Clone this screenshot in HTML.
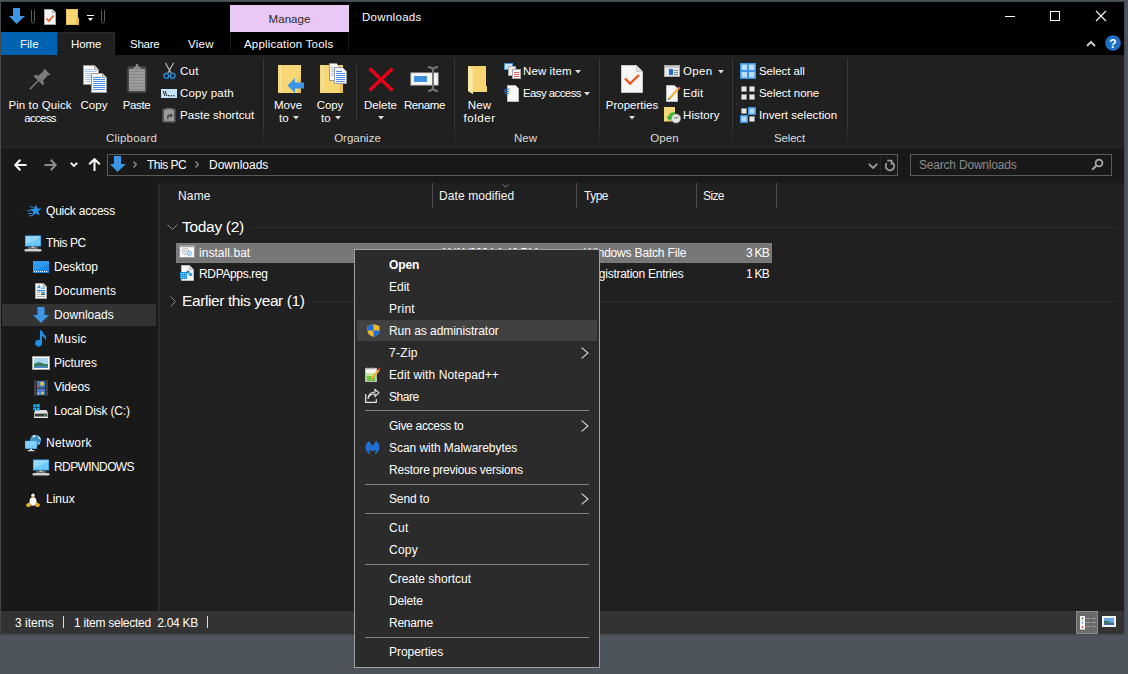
<!DOCTYPE html>
<html><head><meta charset="utf-8">
<style>
*{margin:0;padding:0;box-sizing:border-box}
html,body{width:1128px;height:674px;overflow:hidden;background:#4c535b;font-family:"Liberation Sans",sans-serif;font-size:12px;color:#fff}
.a{position:absolute}
.t{position:absolute;font-size:11.5px;line-height:15px;white-space:nowrap;color:#fff}
.c{text-align:center}
svg{position:absolute;overflow:visible}
</style></head><body>
<!-- window -->
<div class="a" style="left:0;top:1px;width:1125px;height:634px;background:#43484d"></div>
<div class="a" id="win" style="left:1px;top:2px;width:1123px;height:632px;background:#202020"></div>
<!-- title bar -->
<div class="a" style="left:1px;top:2px;width:1123px;height:53px;background:#000"></div>
<div class="a" style="left:230px;top:5px;width:119px;height:27px;background:#e9c8f5"></div>
<div class="t c" style="left:230px;top:12px;width:119px;color:#2a2a2a;letter-spacing:0.05px">Manage</div>
<div class="t" style="left:362px;top:10px;letter-spacing:0.3px">Downloads</div>

<!-- QAT icons -->
<svg style="left:9px;top:8px" width="16" height="16" viewBox="0 0 16 16"><path d="M4 0H11V8H16L7.5 16L0 8H4Z" fill="#3d95e6"/></svg>
<svg style="left:31px;top:10px" width="4" height="13" viewBox="0 0 4 13"><path d="M0.5 0V11.5A1.5 1.5 0 0 0 3.5 11.5V0" fill="none" stroke="#5a5a5a" stroke-width="1"/></svg>
<svg style="left:44px;top:9px" width="12" height="16" viewBox="0 0 12 16"><path d="M0.5 0.5H8.5L11.5 3.5V15.5H0.5Z" fill="#f4f4f4" stroke="#aaa" stroke-width="1"/><path d="M8.5 0.5V3.5H11.5" fill="#ddd" stroke="#aaa"/><path d="M2.5 9.5L5 12L9.5 6.5" fill="none" stroke="#e8561a" stroke-width="1.6"/></svg>
<svg style="left:66px;top:9px" width="13" height="16" viewBox="0 0 13 16"><rect x="0" y="0" width="12" height="16" fill="#f8d775"/><rect x="0.5" y="0.5" width="11" height="15" fill="none" stroke="#e9bd4c"/><rect x="10" y="9" width="3" height="7" fill="#e8c04e"/></svg>
<svg style="left:87px;top:15px" width="8" height="7" viewBox="0 0 8 7"><rect x="0" y="0" width="7" height="1" fill="#fff"/><path d="M1 3H6L3.5 6Z" fill="#fff"/></svg>
<svg style="left:101px;top:10px" width="4" height="13" viewBox="0 0 4 13"><path d="M0.5 0V11.5A1.5 1.5 0 0 0 3.5 11.5V0" fill="none" stroke="#5a5a5a" stroke-width="1"/></svg>
<!-- window controls -->
<div class="a" style="left:1005px;top:16px;width:10px;height:1px;background:#fff"></div>
<div class="a" style="left:1050px;top:11px;width:10px;height:10px;border:1px solid #fff"></div>
<svg style="left:1096px;top:11px" width="10" height="10" viewBox="0 0 10 10"><path d="M0 0L10 10M10 0L0 10" stroke="#fff" stroke-width="1.1"/></svg>
<svg style="left:1086px;top:40px" width="10" height="7" viewBox="0 0 10 7"><path d="M1 6L5 2L9 6" fill="none" stroke="#c8c8c8" stroke-width="2"/></svg>
<svg style="left:1105px;top:35px" width="16" height="16" viewBox="0 0 16 16"><circle cx="8" cy="8" r="7.8" fill="#1f6fc5"/><text x="8" y="12.5" text-anchor="middle" font-family="Liberation Sans" font-weight="bold" font-size="12" fill="#fff">?</text></svg>
<!-- tabs -->
<div class="a" style="left:1px;top:32px;width:56px;height:23px;background:#0063b1"></div>
<div class="a" style="left:57px;top:32px;width:58px;height:23px;background:#202020;border:1px solid #2b2b2b;border-bottom:none"></div>
<div class="t" style="left:20px;top:37px">File</div>
<div class="t" style="left:71px;top:37px;letter-spacing:-0.1px">Home</div>
<div class="t" style="left:130px;top:37px;letter-spacing:-0.25px">Share</div>
<div class="t" style="left:188px;top:37px;letter-spacing:0.3px">View</div>
<div class="a" style="left:230px;top:32px;width:1px;height:18px;background:#1c1c1c"></div>
<div class="a" style="left:348px;top:32px;width:1px;height:18px;background:#1c1c1c"></div>
<div class="t" style="left:244px;top:37px;letter-spacing:0.2px">Application Tools</div>
<!-- ribbon -->
<div class="a" style="left:1px;top:55px;width:1123px;height:92px;background:#202020"></div>
<div class="a" style="left:263px;top:58px;width:1px;height:72px;background:#3a3a3a"></div><div class="a" style="left:263px;top:130px;width:1px;height:13px;background:#2a2a2a"></div>
<div class="a" style="left:454px;top:58px;width:1px;height:72px;background:#3a3a3a"></div><div class="a" style="left:454px;top:130px;width:1px;height:13px;background:#2a2a2a"></div>
<div class="a" style="left:599px;top:58px;width:1px;height:72px;background:#3a3a3a"></div><div class="a" style="left:599px;top:130px;width:1px;height:13px;background:#2a2a2a"></div>
<div class="a" style="left:732px;top:58px;width:1px;height:72px;background:#3a3a3a"></div><div class="a" style="left:732px;top:130px;width:1px;height:13px;background:#2a2a2a"></div>
<div class="a" style="left:847px;top:58px;width:1px;height:72px;background:#3a3a3a"></div><div class="a" style="left:847px;top:130px;width:1px;height:13px;background:#2a2a2a"></div>
<div class="a" style="left:356px;top:65px;width:1px;height:55px;background:#3a3a3a"></div>

<!-- ribbon icons: clipboard -->
<svg style="left:30px;top:69px" width="20" height="20" viewBox="0 0 20 20"><g transform="translate(16,4) rotate(45)"><path d="M-4.5 -2H4.5L3 1L3.5 7.5L6.5 9V11H-6.5V9L-3.5 7.5L-3 1Z" fill="#7a7a7a"/><rect x="-0.8" y="11" width="1.6" height="12" fill="#7a7a7a"/></g></svg>
<svg style="left:83px;top:65px" width="24" height="28" viewBox="0 0 24 28"><path d="M0.5 0.5H11.5L15.5 4.5V19.5H0.5Z" fill="#fbfbfb" stroke="#9a9a9a"/><path d="M11.5 0.5V4.5H15.5" fill="#e0e0e0" stroke="#9a9a9a"/><g fill="#a9c8f0"><rect x="2" y="4" width="8" height="1"/><rect x="2" y="6" width="12" height="1"/><rect x="2" y="8" width="6" height="1"/><rect x="2" y="10" width="6" height="1"/><rect x="2" y="12" width="6" height="1"/><rect x="2" y="14" width="6" height="1"/><rect x="2" y="16" width="6" height="1"/></g>
<path d="M8.5 8.5H19.5L23.5 12.5V27.5H8.5Z" fill="#fbfbfb" stroke="#9a9a9a"/><path d="M19.5 8.5V12.5H23.5" fill="#e0e0e0" stroke="#9a9a9a"/><g fill="#4a90e2"><rect x="10" y="12" width="8" height="1"/><rect x="10" y="14" width="12" height="1"/><rect x="10" y="16" width="12" height="1"/><rect x="10" y="18" width="12" height="1"/><rect x="10" y="20" width="12" height="1"/><rect x="10" y="22" width="12" height="1"/><rect x="10" y="24" width="12" height="1"/></g></svg>
<svg style="left:127px;top:64px" width="20" height="29" viewBox="0 0 20 29"><rect x="0.5" y="2.5" width="19" height="26" rx="2" fill="#4a4a4a" stroke="#3c3c3c"/><rect x="2" y="5" width="16" height="22" fill="#9b9b9b"/><g fill="#8a8a8a"><rect x="2" y="7" width="16" height="1"/><rect x="2" y="10" width="16" height="1"/><rect x="2" y="13" width="16" height="1"/><rect x="2" y="16" width="16" height="1"/><rect x="2" y="19" width="16" height="1"/><rect x="2" y="22" width="16" height="1"/><rect x="2" y="25" width="16" height="1"/></g><path d="M5 6L7 3H8.5V1.5A1.5 1.5 0 0 1 11.5 1.5V3H13L15 6Z" fill="#8c8c8c"/></svg>
<svg style="left:163px;top:63px" width="13" height="17" viewBox="0 0 13 17"><path d="M2.5 0L8 10M10.5 0L5 10" stroke="#c4c4c4" stroke-width="1.1"/><ellipse cx="3.3" cy="12.8" rx="2.3" ry="2.6" fill="none" stroke="#1e8fe0" stroke-width="1.4" transform="rotate(-20 3.3 12.8)"/><ellipse cx="9.7" cy="12.8" rx="2.3" ry="2.6" fill="none" stroke="#1e8fe0" stroke-width="1.4" transform="rotate(20 9.7 12.8)"/></svg>
<svg style="left:161px;top:89px" width="16" height="9" viewBox="0 0 16 9"><rect x="0" y="0" width="16" height="9" fill="#c4e4fb"/><path d="M2 2L4 7M4 2L6 7" stroke="#222" stroke-width="1"/><rect x="7" y="6" width="1.3" height="1.3" fill="#222"/><rect x="9.5" y="6" width="1.3" height="1.3" fill="#222"/><rect x="12" y="6" width="1.3" height="1.3" fill="#222"/></svg>
<svg style="left:162px;top:107px" width="14" height="16" viewBox="0 0 14 16"><rect x="0.5" y="1.5" width="13" height="14" rx="1.5" fill="#555" stroke="#444"/><rect x="2" y="3" width="10" height="11" fill="#9a9a9a"/><path d="M4 1.5H10V3.5H4Z" fill="#8a8a8a"/><path d="M5 12V9.5A2 2 0 0 1 7 7.5H8.5V6L11 8.5L8.5 11V9.5H7.5A1 1 0 0 0 6.5 10.5V12Z" fill="#4a4a4a"/></svg>
<!-- organize -->
<svg style="left:278px;top:65px" width="27" height="29" viewBox="0 0 27 29"><rect x="0" y="0" width="23" height="28" fill="#f7d774"/><rect x="2" y="1" width="1" height="26" fill="#fbe7a4"/><rect x="20" y="14" width="3" height="14" fill="#e9c255"/><path d="M17 13L9.5 20.5L17 28V23.5H26V17.5H17Z" fill="#3d95e6"/></svg>
<svg style="left:320px;top:63px" width="27" height="31" viewBox="0 0 27 31"><rect x="0" y="2" width="23" height="28" fill="#f7d774"/><rect x="2" y="3" width="1" height="26" fill="#fbe7a4"/><rect x="20" y="16" width="3" height="14" fill="#e9c255"/><path d="M9.5 0.5H16.5L19.5 3.5V17.5H9.5Z" fill="#fbfbfb" stroke="#9a9a9a"/><g fill="#a9c8f0"><rect x="11" y="4" width="4" height="1"/><rect x="11" y="6" width="7" height="1"/><rect x="11" y="8" width="3" height="1"/><rect x="11" y="10" width="3" height="1"/><rect x="11" y="12" width="3" height="1"/></g><path d="M14.5 4.5H22.5L26.5 8.5V20.5H14.5Z" fill="#fbfbfb" stroke="#9a9a9a"/><g fill="#4a90e2"><rect x="16" y="8" width="6" height="1"/><rect x="16" y="10" width="9" height="1"/><rect x="16" y="12" width="9" height="1"/><rect x="16" y="14" width="9" height="1"/><rect x="16" y="16" width="9" height="1"/><rect x="16" y="18" width="9" height="1"/></g></svg>
<svg style="left:368px;top:67px" width="26" height="25" viewBox="0 0 26 25"><path d="M1.5 1.5L24.5 23.5M24.5 1.5L1.5 23.5" stroke="#e8001a" stroke-width="3.4"/></svg>
<svg style="left:410px;top:66px" width="30" height="26" viewBox="0 0 30 26"><rect x="1" y="7" width="27" height="12" fill="#f7f7f7" stroke="#cfcfcf" stroke-width="1"/><rect x="4" y="10" width="13" height="6" fill="#3d8fe0"/><path d="M18 1Q21 1 23 3Q25 1 28 1M23 3V23M18 25Q21 25 23 23Q25 25 28 25" fill="none" stroke="#777" stroke-width="2"/></svg>
<!-- dropdown triangles -->
<svg style="left:293px;top:116px" width="6" height="4" viewBox="0 0 6 4"><path d="M0 0H6L3 3.5Z" fill="#ddd"/></svg>
<svg style="left:335px;top:116px" width="6" height="4" viewBox="0 0 6 4"><path d="M0 0H6L3 3.5Z" fill="#ddd"/></svg>
<svg style="left:378px;top:116px" width="6" height="4" viewBox="0 0 6 4"><path d="M0 0H6L3 3.5Z" fill="#ddd"/></svg>
<svg style="left:629px;top:116px" width="6" height="4" viewBox="0 0 6 4"><path d="M0 0H6L3 3.5Z" fill="#ddd"/></svg>
<svg style="left:575px;top:70px" width="6" height="4" viewBox="0 0 6 4"><path d="M0 0H6L3 3.5Z" fill="#ddd"/></svg>
<svg style="left:584px;top:92px" width="6" height="4" viewBox="0 0 6 4"><path d="M0 0H6L3 3.5Z" fill="#ddd"/></svg>
<svg style="left:718px;top:70px" width="6" height="4" viewBox="0 0 6 4"><path d="M0 0H6L3 3.5Z" fill="#ddd"/></svg>
<!-- new -->
<svg style="left:468px;top:66px" width="20" height="28" viewBox="0 0 20 28"><path d="M0 0H18V20H19V26H5V28L0 25Z" fill="#f4cf6a"/><path d="M0 0L5 3V28L0 25Z" fill="#fbe6a2"/><path d="M5 3H18V26H5Z" fill="#f6d572"/></svg>
<svg style="left:504px;top:63px" width="17" height="16" viewBox="0 0 17 16"><rect x="0.5" y="0.5" width="8" height="6" fill="#cde6fb" stroke="#4a90e2"/><rect x="4.5" y="3.5" width="7" height="9" fill="#eee" stroke="#aaa"/><rect x="8.5" y="6.5" width="8" height="9" fill="#f8f8f8" stroke="#aaa"/><g fill="#e06060"><rect x="10" y="9" width="5" height="1"/><rect x="10" y="11" width="5" height="1"/><rect x="10" y="13" width="5" height="1"/></g></svg>
<svg style="left:504px;top:85px" width="16" height="17" viewBox="0 0 16 17"><path d="M3.5 0.5H11.5L14.5 3.5V16.5H3.5Z" fill="#f8f8f8" stroke="#bbb"/><path d="M0 5L6 4M0 7L5 6.5M1 9L5 8.5" stroke="#2b7fd0" stroke-width="1"/></svg>
<!-- open group -->
<svg style="left:621px;top:65px" width="22" height="28" viewBox="0 0 22 28"><path d="M0.5 0.5H15.5L21.5 6.5V27.5H0.5Z" fill="#f6f6f6" stroke="#c8c8c8"/><path d="M15.5 0.5V6.5H21.5" fill="#dedede" stroke="#c8c8c8"/><path d="M4 13.5L9 18.5L18 10" fill="none" stroke="#ea5a1c" stroke-width="2.4"/></svg>
<svg style="left:664px;top:65px" width="16" height="12" viewBox="0 0 16 12"><rect x="0.5" y="0.5" width="15" height="11" fill="#e8e8e8" stroke="#aaa"/><rect x="1" y="1" width="14" height="2" fill="#c8c8c8"/><rect x="5" y="4" width="4" height="6" fill="#1a6fd0"/><g fill="#888"><rect x="10" y="5" width="4" height="1"/><rect x="10" y="7" width="4" height="1"/><rect x="10" y="9" width="4" height="1"/></g></svg>
<svg style="left:666px;top:85px" width="15" height="17" viewBox="0 0 15 17"><path d="M0.5 0.5H8.5L11.5 3.5V16.5H0.5Z" fill="#f8f8f8" stroke="#bbb"/><path d="M3 14L13 3" stroke="#f2b233" stroke-width="2.2"/><path d="M12 2L14 4" stroke="#e05555" stroke-width="2"/><path d="M2 15L3.5 13" stroke="#444" stroke-width="1"/></svg>
<svg style="left:664px;top:107px" width="17" height="17" viewBox="0 0 17 17"><rect x="0" y="0" width="11" height="14.5" fill="#f5d678"/><circle cx="12" cy="11.5" r="4.6" fill="#e6e6e6" stroke="#8a8a8a" stroke-width="0.8"/><path d="M10 12L11.5 10L12.5 11.5L14 9.5" stroke="#555" stroke-width="0.8" fill="none"/><path d="M11 6.5Q6 6 5.5 11" fill="none" stroke="#2bb33a" stroke-width="2.2"/><path d="M2.5 9.5H8.5L5.5 14Z" fill="#2bb33a"/></svg>
<!-- select group -->
<svg style="left:740px;top:63px" width="16" height="16" viewBox="0 0 16 16"><rect x="0" y="0" width="16" height="16" fill="#3d95e6"/><g fill="#b9dcfa"><rect x="1.5" y="1.5" width="5.5" height="5.5"/><rect x="9" y="1.5" width="5.5" height="5.5"/><rect x="1.5" y="9" width="5.5" height="5.5"/><rect x="9" y="9" width="5.5" height="5.5"/></g></svg>
<svg style="left:741px;top:86px" width="14" height="14" viewBox="0 0 14 14"><g fill="#e8e8e8" stroke="#777" stroke-width="0.6"><rect x="0.3" y="0.3" width="5.4" height="5.4"/><rect x="8.3" y="0.3" width="5.4" height="5.4"/><rect x="0.3" y="8.3" width="5.4" height="5.4"/><rect x="8.3" y="8.3" width="5.4" height="5.4"/></g></svg>
<svg style="left:740px;top:107px" width="16" height="16" viewBox="0 0 16 16"><rect x="8" y="0" width="8" height="8" fill="#3d95e6"/><rect x="0" y="8" width="8" height="8" fill="#3d95e6"/><g fill="#b9dcfa"><rect x="9.5" y="1.5" width="5" height="5"/><rect x="1.5" y="9.5" width="5" height="5"/></g><g fill="#e8e8e8" stroke="#777" stroke-width="0.6"><rect x="1.3" y="1.3" width="5.4" height="5.4"/><rect x="9.3" y="9.3" width="5.4" height="5.4"/></g></svg>
<!-- large labels -->
<div class="t c" style="left:0px;top:98px;width:80px;letter-spacing:0.1px">Pin to Quick</div>
<div class="t c" style="left:0px;top:111px;width:80px;letter-spacing:-0.7px">access</div>
<div class="t c" style="left:74px;top:98px;width:40px">Copy</div>
<div class="t c" style="left:116px;top:98px;width:41px;letter-spacing:-0.4px">Paste</div>
<div class="t" style="left:180px;top:64px;letter-spacing:0.25px">Cut</div>
<div class="t" style="left:180px;top:86px;letter-spacing:0.15px">Copy path</div>
<div class="t" style="left:180px;top:108px;letter-spacing:0.05px">Paste shortcut</div>
<div class="t c" style="left:268px;top:98px;width:40px">Move</div>
<div class="t" style="left:279px;top:111px">to</div>
<div class="t c" style="left:310px;top:98px;width:40px;letter-spacing:-0.05px">Copy</div>
<div class="t" style="left:321px;top:111px">to</div>
<div class="t c" style="left:360px;top:98px;width:41px;letter-spacing:-0.05px">Delete</div>
<div class="t c" style="left:402px;top:98px;width:45px;letter-spacing:-0.4px">Rename</div>
<div class="t c" style="left:460px;top:98px;width:39px;letter-spacing:0.15px">New</div>
<div class="t c" style="left:460px;top:111px;width:39px;letter-spacing:0.55px">folder</div>
<div class="t" style="left:523px;top:64px;letter-spacing:0.1px">New item</div>
<div class="t" style="left:523px;top:86px;letter-spacing:-0.6px">Easy access</div>
<div class="t c" style="left:602px;top:98px;width:60px">Properties</div>
<div class="t" style="left:683px;top:64px;letter-spacing:0.3px">Open</div>
<div class="t" style="left:683px;top:86px;letter-spacing:0.15px">Edit</div>
<div class="t" style="left:683px;top:108px;letter-spacing:0.1px">History</div>
<div class="t" style="left:759px;top:64px;letter-spacing:-0.1px">Select all</div>
<div class="t" style="left:759px;top:86px;letter-spacing:-0.05px">Select none</div>
<div class="t" style="left:759px;top:108px;letter-spacing:0.05px">Invert selection</div>
<!-- group labels -->
<div class="t c" style="left:101px;top:131px;width:61px;color:#dcdcdc;letter-spacing:0.2px">Clipboard</div>
<div class="t c" style="left:327px;top:131px;width:61px;color:#dcdcdc">Organize</div>
<div class="t c" style="left:495px;top:131px;width:61px;color:#dcdcdc">New</div>
<div class="t c" style="left:634px;top:131px;width:61px;color:#dcdcdc;letter-spacing:0.1px">Open</div>
<div class="t c" style="left:759px;top:131px;width:61px;color:#dcdcdc;letter-spacing:-0.2px">Select</div>
<!-- address row -->
<div class="a" style="left:1px;top:147px;width:1123px;height:36px;background:#191919"></div>
<div class="a" style="left:1px;top:147px;width:1123px;height:1px;background:#2a2a2a"></div>
<div class="a" style="left:107px;top:154px;width:791px;height:22px;border:1px solid #5a5a5a"></div>
<div class="t" style="left:147px;top:158px;font-size:12px;letter-spacing:-0.5px">This PC</div>
<div class="t" style="left:209px;top:158px;font-size:12px">Downloads</div>
<div class="a" style="left:910px;top:154px;width:202px;height:22px;border:1px solid #5a5a5a"></div>
<div class="t" style="left:919px;top:158px;color:#8a8a8a;font-size:12px;letter-spacing:-0.2px">Search Downloads</div>
<!-- nav pane -->
<div class="a" style="left:1px;top:183px;width:157px;height:428px;background:#191919"></div>
<div class="a" style="left:158px;top:183px;width:2px;height:428px;background:#2a2a2a"></div>
<div class="a" style="left:2px;top:304px;width:154px;height:22px;background:#333"></div>
<div class="t" style="left:46px;top:204px;font-size:12px;letter-spacing:-0.2px">Quick access</div>
<div class="t" style="left:46px;top:236px;font-size:12px;letter-spacing:-0.4px">This PC</div>
<div class="t" style="left:54px;top:260px;font-size:12px">Desktop</div>
<div class="t" style="left:54px;top:284px;font-size:12px;letter-spacing:0.15px">Documents</div>
<div class="t" style="left:54px;top:308px;font-size:12px;letter-spacing:0.05px">Downloads</div>
<div class="t" style="left:54px;top:332px;font-size:12px;letter-spacing:0.25px">Music</div>
<div class="t" style="left:54px;top:356px;font-size:12px;letter-spacing:-0.05px">Pictures</div>
<div class="t" style="left:54px;top:380px;font-size:12px;letter-spacing:-0.1px">Videos</div>
<div class="t" style="left:54px;top:404px;font-size:12px;letter-spacing:-0.2px">Local Disk (C:)</div>
<div class="t" style="left:46px;top:436px;font-size:12px;letter-spacing:0.25px">Network</div>
<div class="t" style="left:54px;top:460px;font-size:12px;letter-spacing:-0.6px">RDPWINDOWS</div>
<div class="t" style="left:46px;top:492px;font-size:12px">Linux</div>
<!-- file list -->
<div class="t" style="left:178px;top:189px;color:#f4f4f4;font-size:12px;letter-spacing:0.15px">Name</div>
<div class="t" style="left:439px;top:189px;color:#f4f4f4;font-size:12px;letter-spacing:0.1px">Date modified</div>
<div class="t" style="left:584px;top:189px;color:#f4f4f4;font-size:12px;letter-spacing:-0.5px">Type</div>
<div class="t" style="left:703px;top:189px;color:#f4f4f4;font-size:12px;letter-spacing:-0.6px">Size</div>
<div class="a" style="left:432px;top:183px;width:1px;height:25px;background:#4e4e4e"></div>
<div class="a" style="left:576px;top:183px;width:1px;height:25px;background:#4e4e4e"></div>
<div class="a" style="left:696px;top:183px;width:1px;height:25px;background:#4e4e4e"></div>
<div class="a" style="left:776px;top:183px;width:1px;height:25px;background:#4e4e4e"></div>
<div class="t" style="left:182px;top:218px;font-size:15.5px;line-height:18px;letter-spacing:-0.3px">Today (2)</div>
<div class="a" style="left:251px;top:227px;width:866px;height:1px;background:#2e2e2e"></div>
<div class="a" style="left:176px;top:243px;width:596px;height:20px;background:#777;border:1px solid #7e7e7e"></div>

<svg style="left:179px;top:245px" width="16" height="13" viewBox="0 0 16 13"><rect x="0.5" y="0.5" width="15" height="12" fill="#fafafa" stroke="#9a9a9a"/><rect x="1" y="1" width="14" height="1.2" fill="#a8a8a8"/><circle cx="6.5" cy="6.3" r="3.1" fill="none" stroke="#777" stroke-width="0.9" stroke-dasharray="1.2 0.7"/><circle cx="6.5" cy="6.3" r="1.3" fill="none" stroke="#999" stroke-width="0.6"/><circle cx="10.5" cy="8.6" r="2.2" fill="#a8d6f8" stroke="#6ab4ec" stroke-width="0.7"/><path d="M9.5 7.6L11.5 9.6M11.5 7.6L9.5 9.6" stroke="#fff" stroke-width="0.6"/></svg>
<svg style="left:180px;top:265px" width="14" height="16" viewBox="0 0 14 16"><path d="M1.5 0.5H9.5L13.5 4.5V15.5H1.5Z" fill="#f8f8f8" stroke="#bbb"/><path d="M9.5 0.5V4.5H13.5" fill="#ddd" stroke="#bbb"/><rect x="0" y="7" width="7" height="7" fill="#1a8ae0"/><g fill="#9fd4fb"><rect x="1" y="8" width="1.2" height="1.2"/><rect x="3" y="8" width="1.2" height="1.2"/><rect x="5" y="8" width="1.2" height="1.2"/><rect x="1" y="10" width="1.2" height="1.2"/><rect x="3" y="10" width="1.2" height="1.2"/><rect x="5" y="10" width="1.2" height="1.2"/><rect x="1" y="12" width="1.2" height="1.2"/><rect x="3" y="12" width="1.2" height="1.2"/><rect x="5" y="12" width="1.2" height="1.2"/></g><path d="M8 5L10 7L8 9L6 7Z" fill="#1a8ae0"/><path d="M10.5 7.5L12.5 9.5L10.5 11.5L8.5 9.5Z" fill="#1a8ae0"/></svg>
<div class="t" style="left:199px;top:246px;font-size:12px;letter-spacing:0.05px">install.bat</div>
<div class="t" style="left:441px;top:246px;font-size:12px;letter-spacing:-0.55px">11/11/2024 1:46 PM</div>
<div class="t" style="left:584px;top:246px;font-size:12px;letter-spacing:-0.18px">Windows Batch File</div>
<div class="t" style="left:738px;top:246px;width:31px;text-align:right;letter-spacing:-0.75px;font-size:12px">3 KB</div>
<div class="t" style="left:199px;top:267px;font-size:12px;letter-spacing:-0.35px">RDPApps.reg</div>
<div class="t" style="left:584px;top:267px;font-size:12px;letter-spacing:-0.26px">Registration Entries</div>
<div class="t" style="left:738px;top:267px;width:31px;text-align:right;letter-spacing:-0.75px;font-size:12px">1 KB</div>
<div class="t" style="left:182px;top:292px;font-size:15.5px;line-height:18px;letter-spacing:-0.4px">Earlier this year (1)</div>
<div class="a" style="left:312px;top:301px;width:805px;height:1px;background:#2e2e2e"></div>

<!-- address row icons -->
<svg style="left:14px;top:159px" width="13" height="12" viewBox="0 0 13 12"><path d="M6.3 0.7L1.3 6L6.3 11.3M1.5 6H12.5" fill="none" stroke="#fff" stroke-width="2"/></svg>
<svg style="left:44px;top:159px" width="13" height="12" viewBox="0 0 13 12"><path d="M6.7 0.7L11.7 6L6.7 11.3M11.5 6H0.5" fill="none" stroke="#8a8a8a" stroke-width="2"/></svg>
<svg style="left:70px;top:162px" width="8" height="5" viewBox="0 0 8 5"><path d="M0.8 0.8L4 4L7.2 0.8" fill="none" stroke="#fff" stroke-width="1.8"/></svg>
<svg style="left:88px;top:158px" width="13" height="13" viewBox="0 0 13 13"><path d="M1.2 6.3L6.5 1.2L11.8 6.3M6.5 1.5V13" fill="none" stroke="#fff" stroke-width="2"/></svg>
<svg style="left:110px;top:156px" width="16" height="16" viewBox="0 0 16 16"><path d="M4 0H11V8H16L7.5 16L0 8H4Z" fill="#3d95e6"/></svg>
<svg style="left:133px;top:161px" width="4" height="7" viewBox="0 0 4 7"><path d="M0.5 0.5L3.3 3.5L0.5 6.5" fill="none" stroke="#8a8a8a" stroke-width="1.4"/></svg>
<svg style="left:195px;top:161px" width="4" height="7" viewBox="0 0 4 7"><path d="M0.5 0.5L3.3 3.5L0.5 6.5" fill="none" stroke="#8a8a8a" stroke-width="1.4"/></svg>
<div class="a" style="left:880px;top:155px;width:1px;height:20px;background:#262626"></div>
<svg style="left:868px;top:163px" width="10" height="6" viewBox="0 0 10 6"><path d="M0.8 0.8L5 5L9.2 0.8" fill="none" stroke="#9a9a9a" stroke-width="1.8"/></svg>
<svg style="left:884px;top:159px" width="12" height="12" viewBox="0 0 12 12"><path d="M7.5 3A4.3 4.3 0 1 1 2.7 4.2" fill="none" stroke="#9a9a9a" stroke-width="1.8"/><path d="M3.2 1.6H7.6V6" fill="none" stroke="#9a9a9a" stroke-width="1.7"/></svg>
<svg style="left:1091px;top:158px" width="13" height="13" viewBox="0 0 13 13"><circle cx="8" cy="5" r="3.4" fill="none" stroke="#a8a8a8" stroke-width="1.8"/><path d="M5.6 7.4L1.2 11.8" stroke="#a8a8a8" stroke-width="2"/></svg>
<!-- nav icons -->
<svg style="left:26px;top:204px" width="16" height="14" viewBox="0 0 16 14"><path d="M10 0.5L11.3 4.6L15.5 4.4L12.2 7.3L13.6 11.6L9.8 9.2L6.3 12.3L7.2 7.8L3.8 5.2L8 4.8Z" fill="#2a93e6"/><path d="M3.5 2.5L8 3.5M1 6.5L5 7.2M2 9.5L6.5 9.5M3 12L6.5 11.5" stroke="#2a93e6" stroke-width="0.9"/></svg>
<svg style="left:24px;top:235px" width="18" height="17" viewBox="0 0 18 17"><rect x="1" y="0.5" width="16" height="11" fill="#3ea6ee"/><rect x="1.8" y="1.3" width="14.4" height="9.4" fill="#6ec8fb"/><path d="M1.8 1.3H16.2V3L1.8 9Z" fill="#92d8ff"/><rect x="7.5" y="11.5" width="3" height="1.5" fill="#c8c8c8"/><rect x="4" y="12.5" width="10" height="1" fill="#bbb"/><rect x="0.5" y="14" width="17" height="2.5" rx="1.2" fill="#d0d0d0"/></svg>
<svg style="left:33px;top:261px" width="16" height="12" viewBox="0 0 16 12"><rect x="0" y="0" width="16" height="12" fill="#1a8ae6"/><path d="M0 0H16V3L0 10Z" fill="#3ea3f2" opacity="0.7"/><path d="M1 10.5H15" stroke="#fff" stroke-width="1" stroke-dasharray="1 1"/></svg>
<svg style="left:35px;top:283px" width="12" height="16" viewBox="0 0 12 16"><path d="M0.5 0.5H8.5L11.5 3.5V15.5H0.5Z" fill="#fafafa" stroke="#a8a8a8"/><path d="M8.5 0.5V3.5H11.5" fill="#ddd" stroke="#a8a8a8"/><path d="M2 5.5L4.3 2.2L5 5.5M2.7 4.5H4.8" fill="none" stroke="#2a8ae0" stroke-width="0.9"/><rect x="6" y="4.6" width="4" height="1" fill="#2a8ae0"/><rect x="2" y="7" width="8" height="1.2" fill="#1a7fe0"/><rect x="2" y="9" width="3" height="0.9" fill="#aaa"/><rect x="2" y="11" width="3" height="0.9" fill="#aaa"/><rect x="6" y="9" width="4" height="1" fill="#4a8ae8"/><rect x="6" y="10.5" width="4" height="1.5" fill="#2d5a3a"/><rect x="2" y="13" width="8" height="0.9" fill="#aaa"/></svg>
<svg style="left:33px;top:307px" width="16" height="16" viewBox="0 0 16 16"><path d="M4.5 0H11.5V8H16L8 16L0 8H4.5Z" fill="#3d95e6"/></svg>
<svg style="left:35px;top:330px" width="12" height="17" viewBox="0 0 12 17"><path d="M5 0.5H7V13A3.5 3.5 0 1 1 5 10Z" fill="#1e90e8"/><path d="M7 0.5Q8 4 10.5 6Q12 8 10 11Q11 8 7 6" fill="#1e90e8"/></svg>
<svg style="left:32px;top:356px" width="18" height="14" viewBox="0 0 18 14"><rect x="0.5" y="0.5" width="17" height="13" fill="#fafafa" stroke="#aaa"/><rect x="2" y="2" width="14" height="10" fill="#a8d8f0"/><path d="M2 8Q6 5 10 7T16 8V12H2Z" fill="#3b7a5a"/><path d="M2 10H16V12H2Z" fill="#4a88c0"/></svg>
<svg style="left:34px;top:380px" width="14" height="16" viewBox="0 0 14 16"><rect x="0" y="0" width="14" height="16" fill="#2a2a2a"/><g fill="#555"><rect x="0.5" y="0.5" width="1.5" height="15"/><rect x="12" y="0.5" width="1.5" height="15"/></g><g fill="#222"><rect x="0.8" y="2" width="0.9" height="1"/><rect x="0.8" y="5" width="0.9" height="1"/><rect x="0.8" y="8" width="0.9" height="1"/><rect x="0.8" y="11" width="0.9" height="1"/><rect x="0.8" y="14" width="0.9" height="1"/><rect x="12.3" y="2" width="0.9" height="1"/><rect x="12.3" y="5" width="0.9" height="1"/><rect x="12.3" y="8" width="0.9" height="1"/><rect x="12.3" y="11" width="0.9" height="1"/><rect x="12.3" y="14" width="0.9" height="1"/></g><rect x="3" y="1" width="8" height="6.5" fill="#3d7fd8"/><rect x="3" y="8.5" width="8" height="6.5" fill="#3d7fd8"/><circle cx="8" cy="3.8" r="2" fill="#e8c030"/><rect x="3" y="5.5" width="3" height="2" fill="#d04040"/><circle cx="8.5" cy="13" r="1.6" fill="#e8c030"/><rect x="3" y="12.5" width="2.5" height="2" fill="#9ad"/><circle cx="7.5" cy="9.8" r="1.1" fill="#c04090"/></svg>
<svg style="left:33px;top:404px" width="16" height="15" viewBox="0 0 16 15"><path d="M2.5 6H13.5L15 9H1Z" fill="#dedede"/><rect x="1" y="9" width="14" height="5" fill="#c4c4c4"/><rect x="1.8" y="9.8" width="12.4" height="2.6" fill="#3a3a3a"/><rect x="11.3" y="10.5" width="1.6" height="1.2" fill="#3d3"/><rect x="1" y="13" width="14" height="1" fill="#e6e6e6"/><g fill="#14b0f0"><rect x="0.3" y="0.3" width="2.8" height="2.8"/><rect x="3.6" y="0" width="3" height="3.1"/><rect x="0.3" y="3.6" width="2.8" height="2.8"/><rect x="3.6" y="3.6" width="3" height="3.1"/></g></svg>
<svg style="left:24px;top:434px" width="18" height="18" viewBox="0 0 18 18"><circle cx="11.5" cy="6.3" r="5.6" fill="#3f8fc0"/><path d="M8 2Q10 0.8 12 1.6Q11 3.5 9 3.6Z M13.5 1.5Q16.5 3 17 6Q15 5 14.5 3.5Z M15 8Q16 9 15.5 10.5Q14 10 14.5 8.5Z" fill="#e4f2fa"/><rect x="1" y="6.8" width="12" height="8" fill="#4bb0f0"/><rect x="1.5" y="7.3" width="11" height="7" fill="#79cdfc"/><path d="M1.5 7.3H12.5V9L1.5 13Z" fill="#8fd8ff" opacity="0.6"/><rect x="6" y="15" width="2" height="1.3" fill="#ddd"/><rect x="3.5" y="16" width="7" height="1.2" rx="0.6" fill="#d8d8d8"/></svg>
<svg style="left:32px;top:459px" width="18" height="17" viewBox="0 0 18 17"><rect x="1" y="0.5" width="16" height="11" fill="#3ea6ee"/><rect x="1.8" y="1.3" width="14.4" height="9.4" fill="#6ec8fb"/><path d="M1.8 1.3H16.2V3L1.8 9Z" fill="#92d8ff"/><rect x="7.5" y="11.5" width="3" height="1.5" fill="#c8c8c8"/><rect x="4" y="12.5" width="10" height="1" fill="#bbb"/><rect x="0.5" y="14" width="17" height="2.5" rx="1.2" fill="#d0d0d0"/></svg>
<svg style="left:26px;top:490px" width="14" height="17" viewBox="0 0 14 17"><ellipse cx="7" cy="5" rx="3.2" ry="4.5" fill="#111"/><ellipse cx="7" cy="11" rx="5" ry="5" fill="#111"/><ellipse cx="7" cy="11.5" rx="3.5" ry="4.2" fill="#fafafa"/><ellipse cx="7" cy="5.5" rx="1.8" ry="2" fill="#eee"/><path d="M5.5 6H8.5L7 7.5Z" fill="#f0b020"/><path d="M0 14.5L3.5 12L5 16.5L1 17Z" fill="#f0b020"/><path d="M14 14.5L10.5 12L9 16.5L13 17Z" fill="#f0b020"/></svg>
<!-- file list icons -->
<svg style="left:502px;top:184px" width="7" height="4" viewBox="0 0 7 4"><path d="M0.5 0.5L3.5 3L6.5 0.5" fill="none" stroke="#8a8a8a" stroke-width="0.9"/></svg>
<svg style="left:167px;top:224px" width="11" height="6" viewBox="0 0 11 6"><path d="M0.5 0.5L5.5 5.5L10.5 0.5" fill="none" stroke="#8a8a8a" stroke-width="1"/></svg>
<svg style="left:170px;top:296px" width="6" height="11" viewBox="0 0 6 11"><path d="M0.5 0.5L5.5 5.5L0.5 10.5" fill="none" stroke="#8a8a8a" stroke-width="1"/></svg>
<!-- status bar -->
<div class="a" style="left:1px;top:611px;width:1123px;height:23px;background:#333"></div>
<div class="t" style="left:15px;top:616px;font-size:12px">3 items</div>
<div class="a" style="left:63px;top:616px;width:1px;height:12px;background:#ddd"></div>
<div class="t" style="left:74px;top:616px;font-size:12px;letter-spacing:-0.25px">1 item selected&nbsp; 2.04 KB</div>
<div class="a" style="left:207px;top:616px;width:1px;height:12px;background:#ddd"></div>

<div class="a" style="left:1076px;top:611px;width:22px;height:23px;background:#6b6b6b;border:1px solid #8c8c8c"></div>
<svg style="left:1080px;top:616px" width="17" height="14" viewBox="0 0 17 14"><g fill="#fff"><rect x="0" y="0" width="5" height="4.5"/><rect x="0" y="4.5" width="5" height="4.5"/><rect x="0" y="9" width="5" height="4.5"/></g><circle cx="2.5" cy="2.3" r="0.9" fill="#3a6a4a"/><circle cx="2.5" cy="6.7" r="0.9" fill="#4a8ae8"/><circle cx="2.5" cy="11.1" r="0.9" fill="#d02020"/><g fill="#a0a0a0"><rect x="6" y="2" width="4" height="1"/><rect x="12" y="2" width="4" height="1"/><rect x="6" y="6" width="4" height="1"/><rect x="12" y="6" width="4" height="1"/><rect x="6" y="10" width="4" height="1"/><rect x="12" y="10" width="4" height="1"/></g></svg>
<svg style="left:1102px;top:616px" width="14" height="11" viewBox="0 0 14 11"><rect x="0" y="0" width="14" height="11" fill="#f4f4f4"/><rect x="2" y="2" width="10" height="7" fill="#6aa8e8"/><path d="M2 5Q5 4 8 6T12 6V9H2Z" fill="#3b7a5a"/><path d="M2 7.5H12V9H2Z" fill="#3a70b0"/></svg>
<!-- context menu -->
<div class="a" style="left:354px;top:249px;width:246px;height:419px;background:#2b2b2b;border:1px solid #a0a0a0"></div>
<div class="a" style="left:357px;top:320px;width:240px;height:21px;background:#414141"></div>
<div class="t" style="left:389px;top:258px;font-weight:bold;font-size:12px;letter-spacing:-0.1px">Open</div>
<div class="t" style="left:389px;top:280px;font-size:12px">Edit</div>
<div class="t" style="left:389px;top:302px;font-size:12px;letter-spacing:0.25px">Print</div>
<div class="t" style="left:389px;top:324px;font-size:12px;letter-spacing:-0.05px">Run as administrator</div>
<div class="t" style="left:389px;top:346px;font-size:12px;letter-spacing:0.3px">7-Zip</div>
<div class="t" style="left:389px;top:368px;font-size:12px;letter-spacing:0.1px">Edit with Notepad++</div>
<div class="t" style="left:389px;top:390px;font-size:12px;letter-spacing:-0.45px">Share</div>
<div class="a" style="left:365px;top:410px;width:224px;height:1px;background:#808080"></div>
<div class="t" style="left:389px;top:419px;font-size:12px;letter-spacing:-0.3px">Give access to</div>
<div class="t" style="left:389px;top:441px;font-size:12px;letter-spacing:-0.05px">Scan with Malwarebytes</div>
<div class="t" style="left:389px;top:463px;font-size:12px;letter-spacing:-0.2px">Restore previous versions</div>
<div class="a" style="left:365px;top:484px;width:224px;height:1px;background:#808080"></div>
<div class="t" style="left:389px;top:492px;font-size:12px;letter-spacing:-0.15px">Send to</div>
<div class="a" style="left:365px;top:513px;width:224px;height:1px;background:#808080"></div>
<div class="t" style="left:389px;top:521px;font-size:12px;letter-spacing:0.3px">Cut</div>
<div class="t" style="left:389px;top:543px;font-size:12px;letter-spacing:0.25px">Copy</div>
<div class="a" style="left:365px;top:564px;width:224px;height:1px;background:#808080"></div>
<div class="t" style="left:389px;top:572px;font-size:12px">Create shortcut</div>
<div class="t" style="left:389px;top:594px;font-size:12px;letter-spacing:-0.15px">Delete</div>
<div class="t" style="left:389px;top:616px;font-size:12px;letter-spacing:-0.25px">Rename</div>
<div class="a" style="left:365px;top:637px;width:224px;height:1px;background:#808080"></div>
<div class="t" style="left:389px;top:645px;font-size:12px;letter-spacing:-0.05px">Properties</div>

<svg style="left:367px;top:324px" width="13" height="13" viewBox="0 0 13 13"><path d="M6.5 0L12.5 2V6.5Q12.5 11 6.5 13Q0.5 11 0.5 6.5V2Z" fill="#f6b72a"/><path d="M6.5 0V6.5H0.5V2Z" fill="#1b6fd6"/><path d="M6.5 6.5H12.5Q12.5 11 6.5 13Z" fill="#1b6fd6"/></svg>
<svg style="left:365px;top:367px" width="16" height="15" viewBox="0 0 16 15"><rect x="0.5" y="1.5" width="11" height="13" fill="#f4f4f4" stroke="#bbb"/><g fill="#aaa"><rect x="2" y="0.5" width="1" height="2"/><rect x="4" y="0.5" width="1" height="2"/><rect x="6" y="0.5" width="1" height="2"/><rect x="8" y="0.5" width="1" height="2"/></g><rect x="1.5" y="6" width="9" height="8" fill="#6cc23a"/><rect x="1.5" y="6" width="9" height="3" fill="#c8e8a0"/><path d="M6 12L14 3" stroke="#f0b030" stroke-width="2.2"/><path d="M13.5 2.5L15 1" stroke="#d03030" stroke-width="2"/></svg>
<svg style="left:365px;top:389px" width="15" height="14" viewBox="0 0 15 14"><path d="M0.7 5V13.3H11.3V10" fill="none" stroke="#e8e8e8" stroke-width="1.2"/><path d="M3 10Q4 5 10 5V7.5L14 3.8L10 0.5V3Q3.5 3 3 10Z" fill="none" stroke="#e8e8e8" stroke-width="1.1"/></svg>
<svg style="left:365px;top:441px" width="16" height="14" viewBox="0 0 16 14"><path d="M4 0Q0 3 0.5 7Q1 11 5.5 13.5Q4 11 4.5 8.5L7.5 10.5L10.5 8.5Q11 11 9.5 13.5Q14 11 14.5 7Q15 3 11 0L7.5 5Z" fill="#2070d4"/></svg>
<svg style="left:581px;top:347px" width="8" height="12" viewBox="0 0 8 12"><path d="M0.6 0.6L7 6L0.6 11.4" fill="none" stroke="#d8d8d8" stroke-width="1.1"/></svg>
<svg style="left:581px;top:420px" width="8" height="12" viewBox="0 0 8 12"><path d="M0.6 0.6L7 6L0.6 11.4" fill="none" stroke="#d8d8d8" stroke-width="1.1"/></svg>
<svg style="left:581px;top:493px" width="8" height="12" viewBox="0 0 8 12"><path d="M0.6 0.6L7 6L0.6 11.4" fill="none" stroke="#d8d8d8" stroke-width="1.1"/></svg>
</body></html>
